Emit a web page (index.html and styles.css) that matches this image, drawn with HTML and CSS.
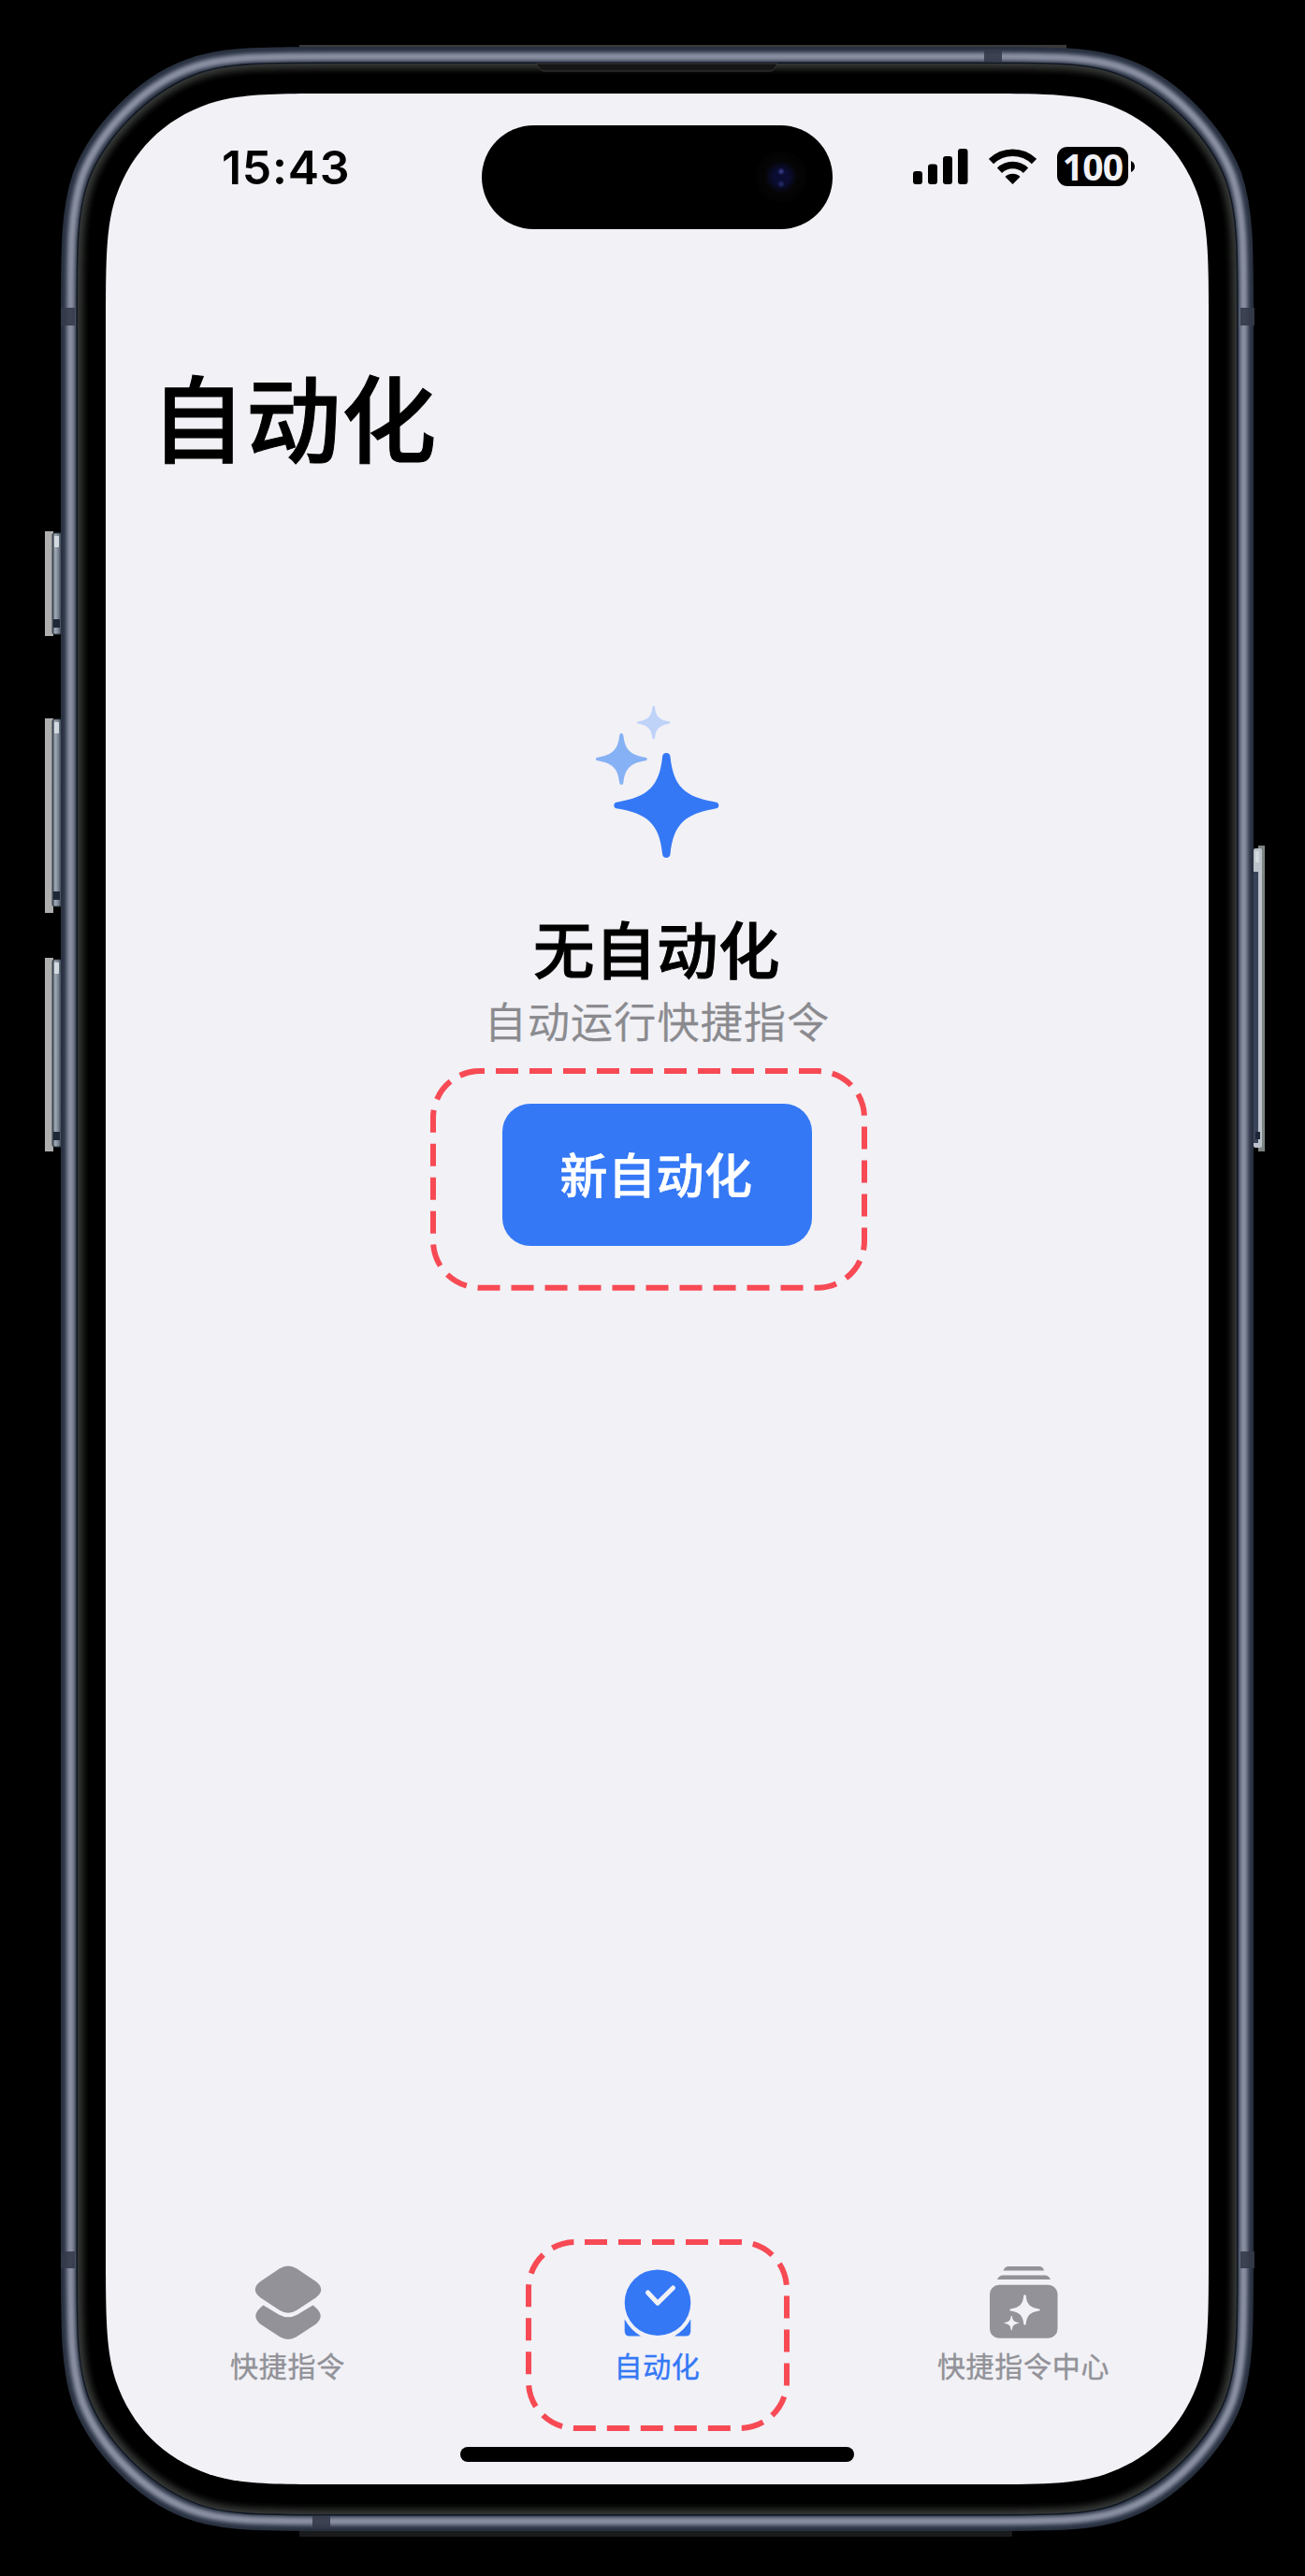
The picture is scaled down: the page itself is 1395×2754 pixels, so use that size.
FILE: index.html
```html
<!DOCTYPE html>
<html lang="zh-CN">
<head>
<meta charset="utf-8">
<title>自动化</title>
<link rel="stylesheet" href="styles.css">
</head>
<body>
<div class="phone">
  <svg class="phone-body" viewBox="0 0 1395 2754" aria-hidden="true">
    <defs>
      <linearGradient id="key" x1="0" x2="1" y1="0" y2="0">
        <stop offset="0" stop-color="#38424e"/>
        <stop offset=".3" stop-color="#a3adb8"/>
        <stop offset=".65" stop-color="#76818e"/>
        <stop offset="1" stop-color="#2c3747"/>
      </linearGradient>
      <filter id="soft" x="-5%" y="-5%" width="110%" height="110%"><feGaussianBlur stdDeviation="3.500"/></filter>
      <filter id="smooth" x="-5%" y="-5%" width="110%" height="110%"><feGaussianBlur stdDeviation="1.500"/></filter>
      <path id="rim" d="M75.500 344.000 C75.500 263 75.500 225 88 188 C106 141 153 92 201 74 C235 60.500 276 60.500 357 60.500 H1048 C1129 60.500 1170 60.500 1204 74 C1252 92 1299 141 1317 188 C1329.500 225 1329.500 263 1329.500 344 V2412 C1329.500 2493 1329.500 2531 1317 2568 C1299 2615 1252 2664 1204 2682 C1170 2695.500 1129 2695.500 1048 2695.500 H357 C276 2695.500 235 2695.500 201 2682 C153 2664 106 2615 88 2568 C75.500 2531 75.500 2493 75.500 2412 Z"/>
      <path id="glass" d="M83 339 C83 264 83 229 95 194 C112 148 157 102 205 82 C237 68 276 68 350 68 H1055 C1129 68 1168 68 1200 82 C1248 102 1293 148 1310 194 C1322 229 1322 264 1322 339 V2417 C1322 2492 1322 2527 1310 2562 C1293 2608 1248 2654 1200 2674 C1168 2688 1129 2688 1055 2688 H350 C276 2688 237 2688 205 2674 C157 2654 112 2608 95 2562 C83 2527 83 2492 83 2417 Z"/>
      <clipPath id="inside"><use href="#glass"/></clipPath>
    </defs>
    <!-- side keys -->
    <g fill="#aeaeae"><path d="M48 568h9v112h-9zM48 768h9v208h-9zM48 1024h9v207h-9z"/></g>
    <g fill="url(#key)" stroke="#37414c" stroke-width="1">
      <rect x="56" y="570" width="10" height="108" rx="2"/>
      <rect x="56" y="769" width="10" height="200" rx="2"/>
      <rect x="56" y="1026" width="10" height="200" rx="2"/>
    </g>
    <path d="M1345 904h7v327h-7z" fill="#7c8582"/>
    <rect x="1340" y="907" width="9" height="320" rx="2" fill="#bcc2ca"/>
    <path d="M1340 932h5v290h-5z" fill="#3a4459"/>
    <g fill="#d4d9e0"><path d="M58 573h5v12h-5zM58 772h5v12h-5zM58 1029h5v12h-5zM1342 910h4v12h-4z"/></g>
    <g fill="#1d2737"><path d="M57 662h7v9h-7zM57 953h7v9h-7zM57 1210h7v9h-7zM1342 1210h5v8h-5z"/></g>
    <!-- metal rim -->
    <path d="M320 48H1140V60H320z" fill="#3a3a3a"/>
    <path d="M320 2700H1082V2712H320z" fill="#1a1b1d"/>
    <g fill="none">
      <use href="#rim" stroke="#293140" stroke-width="21"/>
      <g filter="url(#smooth)">
        <use href="#rim" stroke="#4f586c" stroke-width="12"/>
        <use href="#rim" stroke="#8a90a1" stroke-width="6"/>
      </g>
    </g>
    <use href="#glass" fill="#000" stroke="#111722" stroke-width="3"/>
    <g clip-path="url(#inside)"><use href="#glass" fill="none" stroke="#343834" stroke-width="11" filter="url(#soft)"/></g>
    <!-- antenna breaks -->
    <g fill="#343a49"><path d="M65 329h15v19H65zM1326 329h15v19h-15zM65 2407h15v18H65zM1326 2407h15v18h-15zM1052 54h19v12h-19zM334 2690h19v13h-19z" opacity=".9"/></g>
    <path d="M573 68H831C827 76 826 76 821 76H583C578 76 577 74 573 68Z" fill="#151615" stroke="#3a3d39" stroke-width="1"/>
    <!-- display -->
    <path d="M113 352C113 279.600 113 243.300 123.800 210.500C140.900 161.500 174.500 127.900 223.500 110.800C256.300 100 292.600 100 365 100H1040C1112.400 100 1148.700 100 1181.500 110.800C1230.500 127.900 1264.100 161.500 1281.200 210.500C1292 243.300 1292 279.600 1292 352V2404C1292 2476.400 1292 2512.700 1281.200 2545.500C1264.100 2594.500 1230.500 2628.100 1181.500 2645.200C1148.700 2656 1112.400 2656 1040 2656H365C292.600 2656 256.300 2656 223.500 2645.200C174.500 2628.100 140.900 2594.500 123.800 2545.500C113 2512.700 113 2476.400 113 2404Z" fill="#f1f1f6"/>
  </svg>

  <main class="screen">
    <header class="status">
      <span class="time">15:43</span>
      <span class="indicators">
        <svg class="signal" viewBox="0 0 59 38"><rect y="24" width="10" height="14" rx="3"/><rect x="16" y="16.500" width="10" height="21.500" rx="3"/><rect x="32" y="8" width="10" height="30" rx="3"/><rect x="48" width="10.500" height="38" rx="3"/></svg>
        <svg class="wifi" viewBox="0 0 51 38"><g fill="none" stroke="#000" stroke-width="7.500"><path d="M2.500 13.600A33 33 0 0 1 48.500 13.600"/><path d="M11.500 23.200A20 20 0 0 1 39.500 23.200"/></g><path d="M17.500 30a11.600 11.600 0 0 1 16 0L25.500 38z"/></svg>
        <span class="battery">100</span>
        <svg class="nub" viewBox="0 0 4 12"><path d="M0 0Q4 2 4 6T0 12Z"/></svg>
      </span>
      <div class="island"><span class="camera"></span></div>
    </header>

    <h1 class="title">自动化</h1>

    <section class="empty">
      <svg class="sparkles" viewBox="636 754 134 164">
        <defs><path id="star" d="M-4.200 -52Q-3.800 -56 0 -56T4.200 -52C7.500 -20 20 -9 52 -3.600Q56 -3.200 56 0T52 3.600C20 9 7.500 20 4.200 52Q3.800 56 0 56T-4.200 52C-7.500 20 -20 9 -52 3.600Q-56 3.200 -56 0T-52 -3.600C-20 -9 -7.500 -20 -4.200 -52Z"/></defs>
        <use href="#star" transform="translate(712.300 861)" fill="#3478f6"/>
        <use href="#star" transform="translate(664.300 811.500) scale(.49)" fill="#86b1f4"/>
        <use href="#star" transform="translate(698.700 772.500) scale(.315)" fill="#bfd3f8"/>
      </svg>
      <h2 class="empty-title">无自动化</h2>
      <p class="empty-text">自动运行快捷指令</p>
      <button class="new">新自动化</button>
    </section>

    <nav class="tabs">
      <a class="tab tab-first">
        <svg class="tab-icon" viewBox="0 0 80 80"><path d="M31 3.200Q40 -2.200 49 3.200L69.500 17Q81 25.500 69.500 34.500L49 48Q40 53.500 31 48L10.500 34.500Q-1 25.500 10.500 17Z"/><path d="M13.500 42.500L30 52.500Q40 58 50 52.500L66.500 42.500Q81 53 70 62.500L49 76.300Q40 81.500 31 76.300L10 62.500Q-1 53 13.500 42.500Z"/></svg>
        <span>快捷指令</span>
      </a>
      <a class="tab active">
        <svg class="tab-icon" viewBox="0 0 80 80"><circle cx="40" cy="39.700" r="35.300"/><path d="M29.500 29L40 40.300L56.500 24" fill="none" stroke="#f1f1f6" stroke-width="5" stroke-linecap="round" stroke-linejoin="round"/><path d="M4.700 57.500Q11 69 22 75.500H10Q4.700 75.500 4.700 70ZM75.300 57.500Q69 69 58 75.500H70Q75.300 75.500 75.300 70Z"/></svg>
        <span>自动化</span>
      </a>
      <a class="tab">
        <svg class="tab-icon" viewBox="0 0 80 80"><path d="M18.500 5.500Q20 1 24 1H57Q61 1 62 5.500ZM12 15Q14 10.500 18 10.500H63Q67 10.500 69 15Z"/><rect x="4" y="20.700" width="72.500" height="57" rx="10"/><g fill="#f1f1f6"><use href="#star" transform="translate(41.500 47.500) scale(.29)"/><use href="#star" transform="translate(27.300 61.500) scale(.14)"/></g></svg>
        <span>快捷指令中心</span>
      </a>
    </nav>
    <div class="home"></div>
  </main>

  <svg class="callouts" viewBox="0 0 1395 2754" aria-hidden="true">
    <rect x="463" y="1145" width="461" height="231.700" rx="50" stroke-dashoffset="-17"/>
    <rect x="565" y="2397" width="276" height="199" rx="50" stroke-dashoffset="-10"/>
  </svg>
</div>
</body>
</html>
```
FILE: styles.css
```css
* { box-sizing: border-box; }
body {
  margin: 0;
  background: #000;
  color: #000;
  font-family: "Noto Sans CJK SC", sans-serif;
}
h1, h2, p { margin: 0; }
svg { display: block; }

.phone {
  position: relative;
  width: 1395px;
  height: 2754px;
  padding: 100px 103px 98px 113px;
}
.phone-body, .callouts {
  position: absolute;
  inset: 0;
  width: 100%;
  height: 100%;
}
.callouts {
  fill: none;
  stroke: #f74a54;
  stroke-width: 6;
  stroke-dasharray: 24 12;
  pointer-events: none;
}
.screen {
  position: relative;
  height: 2556px;
  display: flex;
  flex-direction: column;
}

.status {
  position: relative;
  display: flex;
  justify-content: space-between;
  align-items: center;
  height: 60px;
  margin-top: 48px;
  padding: 0 79px 0 124px;
}
.time {
  padding-top: 2px;
  font: 600 50px/60px Inter, sans-serif;
  letter-spacing: .7px;
}
.indicators {
  display: flex;
  align-items: center;
}
.signal { width: 59px; height: 38px; }
.wifi { width: 51px; height: 38px; margin-left: 22px; }
.battery {
  width: 76px;
  height: 42px;
  margin-left: 22px;
  border-radius: 11px;
  background: #000;
  color: #f1f1f6;
  font: 700 39px/42px "Noto Sans", sans-serif;
  letter-spacing: -.8px;
  text-align: center;
}
.nub { width: 4px; height: 12px; margin-left: 3px; }
.island {
  position: absolute;
  left: 402px;
  top: -14px;
  width: 375px;
  height: 111px;
  border-radius: 56px;
  background: #000;
}
.camera {
  position: absolute;
  left: 292px;
  top: 27px;
  width: 56px;
  height: 56px;
  border-radius: 50%;
  background:
    radial-gradient(circle at 50% 40%, #34377e 0 1px, transparent 4px),
    radial-gradient(circle at 50% 64%, #202a62 0 1px, transparent 4px),
    radial-gradient(circle, #0b0c32 0 8px, #08091c 13px, #060506 17px, #020202 28px);
}

.title {
  margin: 175px 0 0 48px;
  font-size: 101.5px;
  line-height: 120px;
  font-weight: 500;
  letter-spacing: .5px;
  -webkit-text-stroke: 1px #000;
}
.empty {
  display: flex;
  flex-direction: column;
  align-items: center;
  margin-top: 251px;
}
.sparkles { width: 134px; height: 164px; }
.empty-title {
  margin-top: 55px;
  padding-right: 1px;
  font-size: 65.5px;
  line-height: 80px;
  font-weight: 500;
  letter-spacing: .5px;
  -webkit-text-stroke: 1px #000;
}
.empty-text {
  margin-top: 8px;
  color: #8a8a8e;
  font-size: 45px;
  line-height: 60px;
  letter-spacing: 1.2px;
  font-weight: 350;
  -webkit-text-stroke: .4px #8a8a8e;
}
.new {
  width: 331px;
  height: 152px;
  margin-top: 59px;
  padding: 0 2px 4px 0;
  border: 0;
  border-radius: 30px;
  background: #3478f6;
  color: #fff;
  font: 500 51px/60px "Noto Sans CJK SC", sans-serif;
  letter-spacing: .5px;
  -webkit-text-stroke: .6px #fff;
}

.tabs {
  display: grid;
  grid-template-columns: repeat(3, 1fr);
  margin-top: auto;
}
.tab {
  display: flex;
  flex-direction: column;
  align-items: center;
  gap: 8px;
  padding-right: 3px;
  color: #929298;
  font-size: 30px;
  line-height: 36px;
  letter-spacing: .7px;
  -webkit-text-stroke: .4px currentColor;
}
.tab-first { padding-right: 4px; }
.active { padding-right: 0; color: #3478f6; }
.tab-icon { width: 80px; height: 80px; fill: currentColor; }
.home {
  width: 421px;
  height: 16px;
  margin: 70px auto 24px;
  border-radius: 8px;
  background: #000;
}
```
